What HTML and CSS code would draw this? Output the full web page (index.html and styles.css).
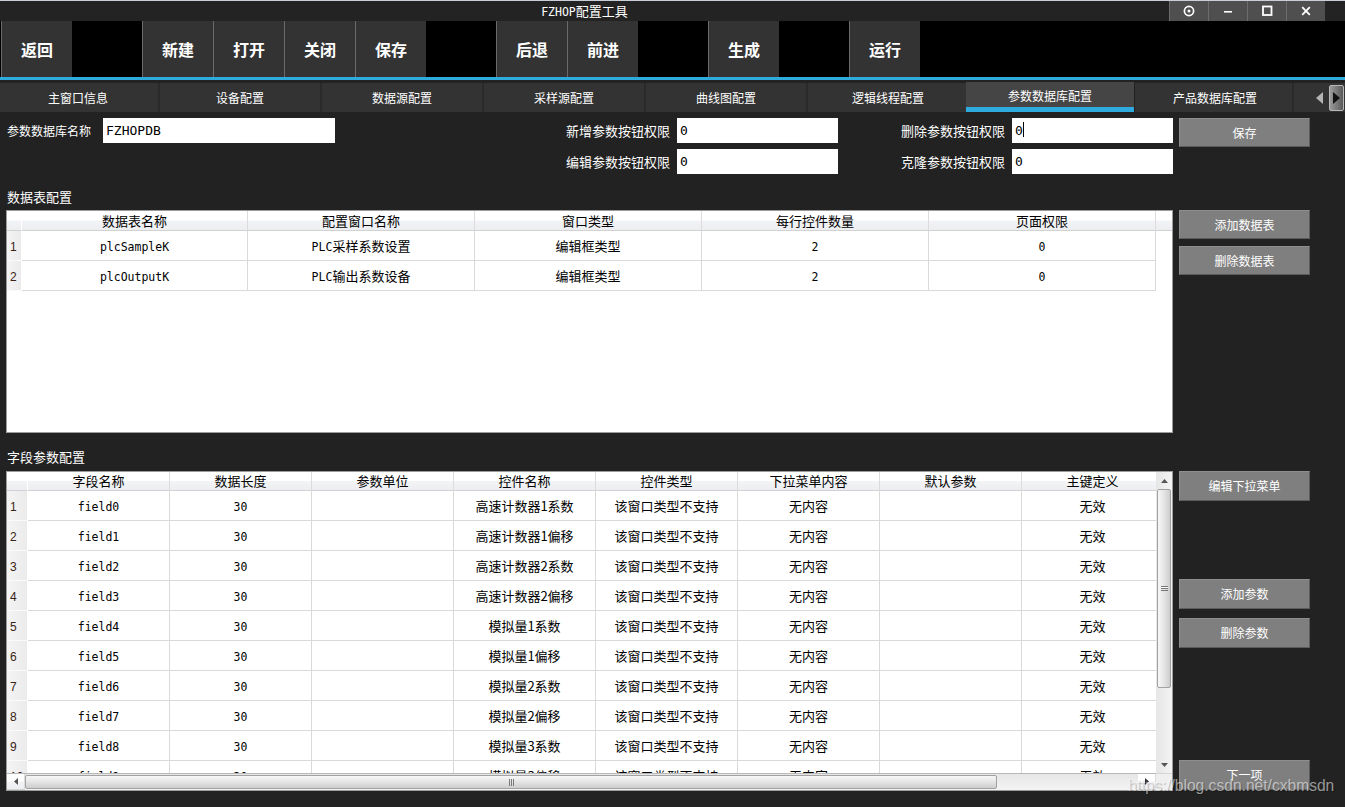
FILE: index.html
```html
<!DOCTYPE html>
<html lang="zh-CN">
<head>
<meta charset="utf-8">
<title>FZHOP配置工具</title>
<link rel="stylesheet" href="styles.css">
</head>
<body>
<div class="window">
  <header class="titlebar">
    <div class="title"><span class="tlat">FZHOP</span>配置工具</div>
    <div class="winctl">
      <span class="wbtn"><svg width="14" height="14" viewBox="0 0 14 14"><circle cx="7" cy="7" r="4.6" fill="none" stroke="#fff" stroke-width="1.7"/><circle cx="7" cy="7" r="1.5" fill="#fff"/></svg></span>
      <span class="wbtn"><svg width="14" height="14" viewBox="0 0 14 14"><rect x="3" y="7" width="8" height="1.6" fill="#fff"/></svg></span>
      <span class="wbtn"><svg width="14" height="14" viewBox="0 0 14 14"><rect x="3" y="2.5" width="8.5" height="8.5" fill="none" stroke="#fff" stroke-width="1.8"/></svg></span>
      <span class="wbtn"><svg width="14" height="14" viewBox="0 0 14 14"><path d="M3.2 3.2 L10.8 10.8 M10.8 3.2 L3.2 10.8" stroke="#fff" stroke-width="1.8"/></svg></span>
    </div>
  </header>

  <nav class="toolbar">
    <span class="tb-btn">返回</span>
    <span class="tb-gap"></span>
    <span class="tb-btn">新建</span>
    <span class="tb-btn">打开</span>
    <span class="tb-btn">关闭</span>
    <span class="tb-btn">保存</span>
    <span class="tb-gap"></span>
    <span class="tb-btn">后退</span>
    <span class="tb-btn">前进</span>
    <span class="tb-gap"></span>
    <span class="tb-btn">生成</span>
    <span class="tb-gap"></span>
    <span class="tb-btn">运行</span>
  </nav>
  <div class="accent"></div>

  <div class="tabbar">
    <div class="tabs">
      <div class="tab first">主窗口信息</div>
      <div class="tab">设备配置</div>
      <div class="tab">数据源配置</div>
      <div class="tab">采样源配置</div>
      <div class="tab">曲线图配置</div>
      <div class="tab">逻辑线程配置</div>
      <div class="tab active">参数数据库配置</div>
      <div class="tab">产品数据库配置</div>
    </div>
    <div class="tab-scroll">
      <svg class="tleft" width="8" height="12" viewBox="0 0 8 12"><path d="M7 0 L7 12 L0 6 Z" fill="#b4b4b4"/></svg>
      <span class="tright"><svg width="8" height="12" viewBox="0 0 8 12"><path d="M0 0 L0 12 L7 6 Z" fill="#111"/></svg></span>
    </div>
  </div>

  <main class="content">
    <section class="form">
      <label class="lbl l">参数数据库名称</label>
      <div class="inp">FZHOPDB</div>
      <label class="lbl r">新增参数按钮权限</label>
      <div class="inp">0</div>
      <label class="lbl r">删除参数按钮权限</label>
      <div class="inp">0<span class="caret"></span></div>
      <label class="lbl r col3">编辑参数按钮权限</label>
      <div class="inp">0</div>
      <label class="lbl r">克隆参数按钮权限</label>
      <div class="inp">0</div>
    </section>
    <div class="btncol"><span class="btn">保存</span></div>

    <div class="sec sec1">数据表配置</div>

    <div class="grid g1">
      <div class="hd1">
        <div class="h rn"></div>
        <div class="h">数据表名称</div>
        <div class="h">配置窗口名称</div>
        <div class="h">窗口类型</div>
        <div class="h">每行控件数量</div>
        <div class="h">页面权限</div>
        <div class="h fill"></div>
      </div>
      <div class="r1">
        <div class="c rn">1</div>
        <div class="c"><span class="lat">plcSampleK</span></div>
        <div class="c"><span class="lat">PLC</span>采样系数设置</div>
        <div class="c">编辑框类型</div>
        <div class="c"><span class="lat">2</span></div>
        <div class="c"><span class="lat">0</span></div>
      </div>
      <div class="r1">
        <div class="c rn">2</div>
        <div class="c"><span class="lat">plcOutputK</span></div>
        <div class="c"><span class="lat">PLC</span>输出系数设备</div>
        <div class="c">编辑框类型</div>
        <div class="c"><span class="lat">2</span></div>
        <div class="c"><span class="lat">0</span></div>
      </div>
    </div>
    <div class="btncol gap7">
      <span class="btn">添加数据表</span>
      <span class="btn">删除数据表</span>
    </div>

    <div class="sec sec2">字段参数配置</div>

    <div class="grid g2">
      <div class="g2-main">
        <div class="g2-view">
          <div class="hd2">
            <div class="h rn"></div>
            <div class="h">字段名称</div>
            <div class="h">数据长度</div>
            <div class="h">参数单位</div>
            <div class="h">控件名称</div>
            <div class="h">控件类型</div>
            <div class="h">下拉菜单内容</div>
            <div class="h">默认参数</div>
            <div class="h">主键定义</div>
          </div>
          <div class="r2"><div class="c rn">1</div><div class="c"><span class="lat">field0</span></div><div class="c"><span class="lat">30</span></div><div class="c"></div><div class="c">高速计数器1系数</div><div class="c">该窗口类型不支持</div><div class="c">无内容</div><div class="c"></div><div class="c">无效</div></div>
          <div class="r2"><div class="c rn">2</div><div class="c"><span class="lat">field1</span></div><div class="c"><span class="lat">30</span></div><div class="c"></div><div class="c">高速计数器1偏移</div><div class="c">该窗口类型不支持</div><div class="c">无内容</div><div class="c"></div><div class="c">无效</div></div>
          <div class="r2"><div class="c rn">3</div><div class="c"><span class="lat">field2</span></div><div class="c"><span class="lat">30</span></div><div class="c"></div><div class="c">高速计数器2系数</div><div class="c">该窗口类型不支持</div><div class="c">无内容</div><div class="c"></div><div class="c">无效</div></div>
          <div class="r2"><div class="c rn">4</div><div class="c"><span class="lat">field3</span></div><div class="c"><span class="lat">30</span></div><div class="c"></div><div class="c">高速计数器2偏移</div><div class="c">该窗口类型不支持</div><div class="c">无内容</div><div class="c"></div><div class="c">无效</div></div>
          <div class="r2"><div class="c rn">5</div><div class="c"><span class="lat">field4</span></div><div class="c"><span class="lat">30</span></div><div class="c"></div><div class="c">模拟量1系数</div><div class="c">该窗口类型不支持</div><div class="c">无内容</div><div class="c"></div><div class="c">无效</div></div>
          <div class="r2"><div class="c rn">6</div><div class="c"><span class="lat">field5</span></div><div class="c"><span class="lat">30</span></div><div class="c"></div><div class="c">模拟量1偏移</div><div class="c">该窗口类型不支持</div><div class="c">无内容</div><div class="c"></div><div class="c">无效</div></div>
          <div class="r2"><div class="c rn">7</div><div class="c"><span class="lat">field6</span></div><div class="c"><span class="lat">30</span></div><div class="c"></div><div class="c">模拟量2系数</div><div class="c">该窗口类型不支持</div><div class="c">无内容</div><div class="c"></div><div class="c">无效</div></div>
          <div class="r2"><div class="c rn">8</div><div class="c"><span class="lat">field7</span></div><div class="c"><span class="lat">30</span></div><div class="c"></div><div class="c">模拟量2偏移</div><div class="c">该窗口类型不支持</div><div class="c">无内容</div><div class="c"></div><div class="c">无效</div></div>
          <div class="r2"><div class="c rn">9</div><div class="c"><span class="lat">field8</span></div><div class="c"><span class="lat">30</span></div><div class="c"></div><div class="c">模拟量3系数</div><div class="c">该窗口类型不支持</div><div class="c">无内容</div><div class="c"></div><div class="c">无效</div></div>
          <div class="r2"><div class="c rn">10</div><div class="c"><span class="lat">field9</span></div><div class="c"><span class="lat">30</span></div><div class="c"></div><div class="c">模拟量3偏移</div><div class="c">该窗口类型不支持</div><div class="c">无内容</div><div class="c"></div><div class="c">无效</div></div>
        </div>
        <div class="vscroll">
          <span class="sarr"><svg width="7" height="4" viewBox="0 0 7 4"><path d="M0 4 L3.5 0 L7 4 Z" fill="#555"/></svg></span>
          <div class="vthumb"><span class="grip-v"></span></div>
          <div class="strack"></div>
          <span class="sarr"><svg width="7" height="4" viewBox="0 0 7 4"><path d="M0 0 L7 0 L3.5 4 Z" fill="#555"/></svg></span>
        </div>
      </div>
      <div class="g2-bottom">
        <div class="hscroll">
          <span class="sarr h"><svg width="4" height="7" viewBox="0 0 4 7"><path d="M4 0 L4 7 L0 3.5 Z" fill="#555"/></svg></span>
          <div class="hthumb"><span class="grip-h"></span></div>
          <div class="strack"></div>
          <span class="sarr h"><svg width="4" height="7" viewBox="0 0 4 7"><path d="M0 0 L0 7 L4 3.5 Z" fill="#333"/></svg></span>
        </div>
        <div class="corner"></div>
      </div>
    </div>
    <div class="btncol col2">
      <span class="btn b-edit">编辑下拉菜单</span>
      <span class="btn b-add">添加参数</span>
      <span class="btn b-del">删除参数</span>
      <span class="btn b-next">下一项</span>
    </div>
  </main>

  <div class="watermark">https://blog.csdn.net/cxbmsdn</div>
</div>
</body>
</html>
```

FILE: styles.css
```css
* { box-sizing: border-box; }
html, body { margin: 0; padding: 0; }
body {
  width: 1345px;
  height: 807px;
  overflow: hidden;
  background: #222;
  color: #fff;
  font-family: "Noto Sans CJK SC", "Noto Sans", sans-serif;
}
.window {
  position: relative;
  width: 1345px;
  height: 807px;
  background: #222;
  overflow: hidden;
}

/* title bar */
.titlebar {
  display: flex;
  height: 21px;
  background: #232323;
  border-top: 1px solid #c9ced8;
}
.title {
  flex: 1;
  text-align: center;
  font-size: 13px;
  line-height: 20px;
  color: #fff;
}
.tlat { font-family: "DejaVu Sans Mono", monospace; font-size: 11.5px; }
.winctl { display: flex; margin-right: 20px; }
.wbtn {
  width: 39px;
  height: 20px;
  background: #4f4f4f;
  border-left: 1px solid #6c6c6c;
  display: flex;
  align-items: center;
  justify-content: center;
}

/* toolbar */
.toolbar {
  display: flex;
  height: 56px;
  background: #000;
  padding-left: 1px;
}
.tb-btn {
  width: 71px;
  height: 56px;
  background: #333;
  border-left: 1px solid #6a6a6a;
  color: #fff;
  font-weight: bold;
  font-size: 16px;
  line-height: 56px;
  text-align: center;
}
.tb-gap { width: 70px; }
.accent { height: 3px; background: #2eaadc; }

/* tabs */
.tabbar {
  display: flex;
  height: 30px;
  margin-top: 2px;
  align-items: flex-end;
}
.tabs {
  display: flex;
  align-items: flex-end;
  width: 1292px;
  height: 30px;
  overflow: hidden;
}
.tab {
  flex: none;
  width: 162px;
  height: 29px;
  background: #333;
  border-right: 2px solid #2a2a2a;
  font-size: 12px;
  line-height: 29px;
  text-align: center;
  color: #fff;
}
.tab.first { margin-left: -2px; }
.tab.active {
  position: relative;
  z-index: 1;
  width: 168px;
  height: 30px;
  margin-left: -4px;
  margin-right: 1px;
  background: #454545;
  border-right: 0;
  border-bottom: 5px solid #2eaadc;
  padding-top: 2px;
  line-height: 23px;
}
.tab-scroll {
  display: flex;
  align-items: center;
  width: 53px;
  height: 29px;
  background: #333;
  border-left: 2px solid #2a2a2a;
  padding-left: 22px;
}
.tleft { margin-right: 5px; }
.tright {
  display: flex;
  align-items: center;
  width: 15px;
  height: 26px;
  border: 1px solid #b8b8b8;
  border-radius: 2px;
  background: linear-gradient(90deg, #9a9a9a, #5a5a5a);
  padding-left: 3px;
}

/* content */
.content {
  display: grid;
  grid-template-columns: 1167px 131px;
  column-gap: 6px;
  padding: 6px 0 0 6px;
}
.form {
  display: grid;
  grid-template-columns: 97px 232px 342px 161px 174px 161px;
  grid-template-rows: 25px 25px;
  row-gap: 6px;
}
.lbl {
  font-size: 12px;
  line-height: 25px;
  white-space: nowrap;
  color: #fff;
}
.lbl.l { padding-left: 1px; }
.lbl.r { text-align: right; padding-right: 7px; font-size: 13px; }
.lbl.col3 { grid-column: 3; }
.inp {
  height: 25px;
  background: #fff;
  color: #000;
  font-family: "DejaVu Sans Mono", monospace;
  font-size: 13px;
  line-height: 26px;
  padding-left: 3px;
}
.caret {
  display: inline-block;
  width: 1px;
  height: 15px;
  background: #000;
  vertical-align: -2px;
}

.btncol { display: flex; flex-direction: column; align-items: flex-start; }
.gap7 { gap: 7px; }
.btn {
  display: block;
  width: 131px;
  height: 29px;
  background: #7f7f7f;
  color: #fff;
  font-size: 12px;
  line-height: 27px;
  text-align: center;
  border: 1px solid #5c5c5c;
  border-top-color: #8e8e8e;
  border-left-color: #8e8e8e;
}
.col2 .btn { height: 30px; line-height: 28px; }
.b-add { margin-top: 78px; }
.b-del { margin-top: 9px; }
.b-next { margin-top: 112px; }

.sec {
  grid-column: 1 / -1;
  height: 22px;
  font-size: 13px;
  line-height: 22px;
  padding-left: 1px;
}
.sec1 { margin: 12px 0 2px; }
.sec2 { margin: 13px 0 3px; }

/* grids */
.grid {
  background: #fff;
  border: 1px solid #9c9c9c;
  color: #000;
  overflow: hidden;
}
.g1 { height: 223px; }
.g2 { height: 320px; display: flex; flex-direction: column; }

.hd1, .r1 {
  display: grid;
  grid-template-columns: 15px 226px 227px 227px 227px 227px 16px;
}
.hd2, .r2 {
  display: grid;
  grid-template-columns: 21px repeat(8, 142px);
}
.h {
  height: 20px;
  font-size: 13px;
  line-height: 19px;
  text-align: center;
  white-space: nowrap;
  background: linear-gradient(#ffffff 0%, #ffffff 48%, #f2f3f5 52%, #eceef1 100%);
  border-right: 1px solid #dcdcdc;
  border-bottom: 1px solid #d2d2d2;
}
.hd2 .h { height: 19px; line-height: 18px; }
.h.fill { border-right: 0; }
.c {
  height: 30px;
  font-size: 13px;
  line-height: 29px;
  text-align: center;
  white-space: nowrap;
  overflow: hidden;
  border-right: 1px solid #d9d9d9;
  border-bottom: 1px solid #d9d9d9;
}
.c.rn {
  text-align: left;
  padding: 3px 0 0 3px;
  line-height: 27px;
  font-family: "Liberation Sans", sans-serif;
  font-size: 12px;
  color: #3a2314;
  background: linear-gradient(90deg, #f4f4f4, #ebebeb);
  border-right: 1px solid #ffffff;
  border-bottom: 1px solid #fafafa;
}
.h.rn { border-right: 1px solid #ffffff; }
.lat {
  font-family: "DejaVu Sans Mono", monospace;
  font-size: 11.5px;
}

.g2-main { display: flex; height: 301px; }
.g2-view { width: 1149px; height: 301px; overflow: hidden; }
.vscroll {
  width: 16px;
  display: flex;
  flex-direction: column;
  align-items: center;
  background: linear-gradient(90deg, #e6e6e6, #f4f4f4);
}
.sarr {
  flex: none;
  width: 16px;
  height: 17px;
  display: flex;
  align-items: center;
  justify-content: center;
}
.sarr.h { width: 18px; height: 16px; }
.strack { flex: 1; }
.vthumb {
  width: 14px;
  height: 199px;
  border: 1px solid #a2a2a2;
  border-radius: 2px;
  background: linear-gradient(90deg, #f7f7f7, #e4e4e4 50%, #cdcdcd);
  display: flex;
  align-items: center;
  justify-content: center;
}
.grip-v {
  width: 7px;
  height: 5px;
  border-top: 1px solid #777;
  border-bottom: 1px solid #777;
  background: linear-gradient(#fff 0, #fff 1px, #777 1px, #777 2px, transparent 2px);
}
.g2-bottom { display: flex; height: 17px; }
.hscroll {
  width: 1149px;
  display: flex;
  align-items: center;
  background: linear-gradient(#e6e6e6, #f4f4f4);
  border-top: 1px solid #b8b8b8;
}
.hthumb {
  width: 972px;
  height: 14px;
  border: 1px solid #a2a2a2;
  border-radius: 2px;
  background: linear-gradient(#f7f7f7, #e4e4e4 50%, #cdcdcd);
  display: flex;
  align-items: center;
  justify-content: center;
}
.grip-h {
  width: 5px;
  height: 7px;
  border-left: 1px solid #777;
  border-right: 1px solid #777;
  background: linear-gradient(90deg, transparent 1px, #777 1px, #777 2px, transparent 2px);
}
.corner { width: 16px; background: #efefef; border-top: 1px solid #d6d6d6; }

.watermark {
  position: absolute;
  left: 1128px;
  top: 776px;
  font-family: "Liberation Sans", Arial, sans-serif;
  font-size: 15.6px;
  line-height: 20px;
  color: rgba(255, 255, 255, 0.55);
  text-shadow: 1px 1px 1px rgba(0, 0, 0, 0.25);
  white-space: nowrap;
}
```
